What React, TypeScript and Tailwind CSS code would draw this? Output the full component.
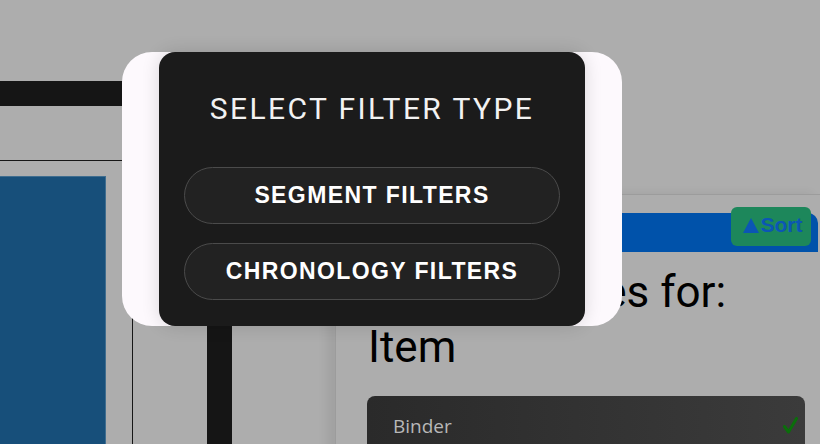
import React from "react";

const FilterTypeModal = () => {
  return (
    <div className="absolute left-[122px] top-[52px] w-[500px] h-[274px] rounded-[30px] bg-[#fdf9fd] px-[37px]">
      <div className="h-full rounded-[16px] bg-[#1b1b1b] shadow-[0_0_18px_rgba(0,0,0,0.14)] px-[25px] pt-[42px] pb-[26px] flex flex-col">
        <h2 className="h-[30px] text-[30px] leading-[30px] text-center text-[#f2f2f2] tracking-[2.4px] font-normal font-[family-name:Roboto,sans-serif]">
          SELECT FILTER TYPE
        </h2>

        <div className="mt-[43px] flex flex-col gap-[19px]">
          {["SEGMENT FILTERS", "CHRONOLOGY FILTERS"].map((label) => (
            <button
              key={label}
              className="h-[57px] rounded-full border border-[#4b4b4b] bg-[#222222] text-white text-[23px] font-bold tracking-[1.4px] font-[family-name:'Liberation_Sans',Arial,sans-serif]"
            >
              {label}
            </button>
          ))}
        </div>
      </div>
    </div>
  );
};

export default function App() {
  return (
    <div className="relative w-[820px] h-[444px] overflow-hidden bg-[#adadad] flex">
      {/* Left column (behind overlay) */}
      <div className="w-[232px] shrink-0 pt-[81px] flex flex-col">
        <div className="flex-1 border-t-[25px] border-r-[25px] border-[#151515] pt-[54px] flex flex-col">
          <div className="w-[133px] flex-1 border-t border-r border-[#161616] pt-[15px] flex">
            <div className="w-[106px] bg-[#174f7a] border-t border-r border-[#3f6d8f]" />
          </div>
        </div>
      </div>

      {/* Right panel */}
      <div className="flex-1 pl-[103px] pt-[194px] flex flex-col">
        <div className="flex-1 border-t border-l border-[#9c9c9c] shadow-[-8px_0_10px_rgba(0,0,0,0.07)] pl-[31px] pr-[2px] pt-[18px] font-[family-name:Roboto,sans-serif]">
          <div className="relative h-[39px] bg-[#0052aa] rounded-tr-[10px]">
            <button className="absolute -top-[6px] right-[7px] w-[80px] h-[39px] pb-[4px] pl-[3px] rounded-[6px] bg-[#1d875b] text-[#0b56b5] text-[21px] font-bold flex items-center justify-center gap-[2px] font-[family-name:'Liberation_Sans',Arial,sans-serif]">
              <svg width="16" height="15" viewBox="0 0 16 15" className="mt-[1px]">
                <path d="M8 0 L16 15 L0 15 Z" fill="#0b56b5" />
              </svg>
              Sort
            </button>
          </div>

          <h1 className="mt-[13px] pl-[1px] text-[44px] leading-[55px] text-black font-normal">
            Subcategories for:
            <br />
            Item
          </h1>

          <div className="mt-[21px] mr-[13px] h-[60px] rounded-[8px] bg-gradient-to-r from-[#2a2a2a] to-[#3b3b3b] pl-[26px] pr-[7px] pt-[18px] flex items-start justify-between">
            <span className="text-[19px] leading-[25px] text-[#b8b8b8] font-[family-name:'Open_Sans',sans-serif]">
              Binder
            </span>
            <svg width="15" height="17" viewBox="0 0 15 17" className="mt-[3px]">
              <path d="M1.5 9.5 L5.5 15 L13.5 1.5" fill="none" stroke="#0b6e0b" strokeWidth="3" strokeLinecap="round" strokeLinejoin="round" />
            </svg>
          </div>
        </div>
      </div>

      <FilterTypeModal />
    </div>
  );
}
